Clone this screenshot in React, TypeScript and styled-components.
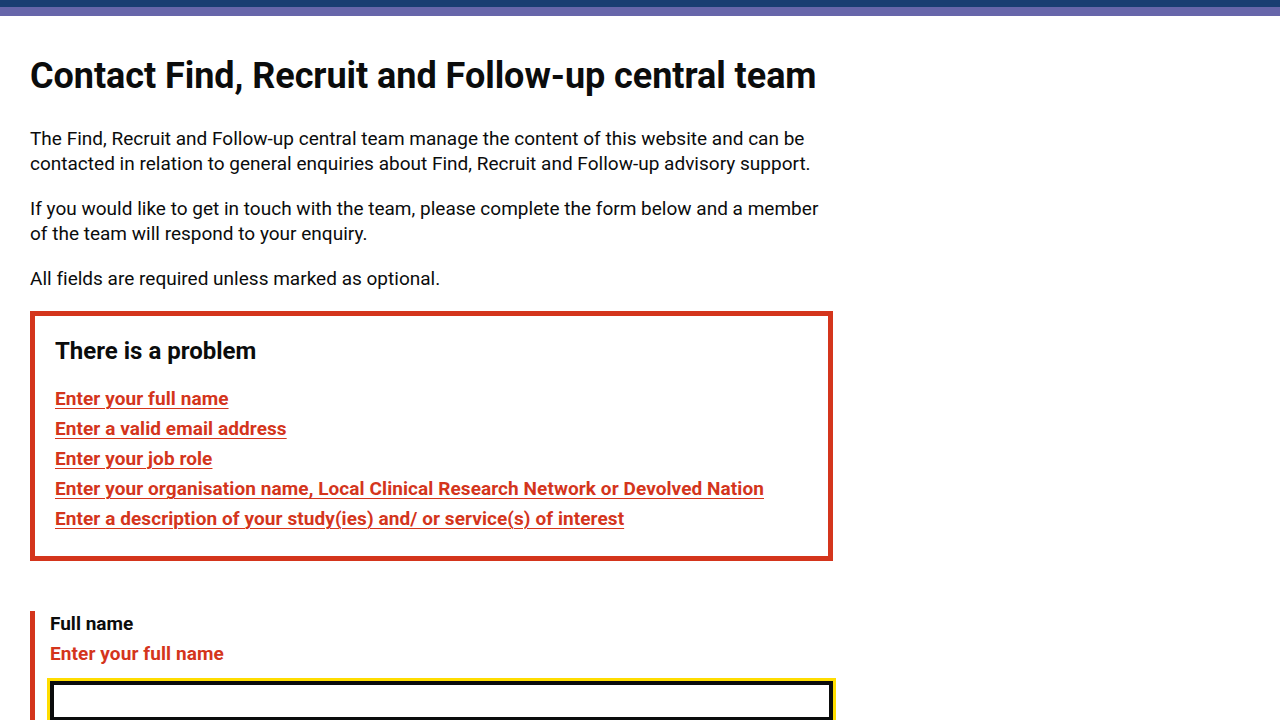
import React from "react";
import styled, { createGlobalStyle } from "styled-components";

const Global = createGlobalStyle`
  html, body { margin: 0; padding: 0; background: #ffffff; }
  body { font-family: Roboto, "Liberation Sans", Arial, sans-serif; color: #0b0c0c; }
  * { box-sizing: border-box; }
`;

const TopBar = styled.div`
  height: 7px;
  background: #1a3e72;
`;

const Stripe = styled.div`
  height: 9px;
  background: #6766aa;
`;

const Main = styled.main`
  padding: 40px 30px 0 30px;
`;

const Column = styled.div`
  width: 803px;
`;

const Title = styled.h1`
  margin: 0 0 30px 0;
  font-size: 36px;
  line-height: 40px;
  font-weight: 700;
  letter-spacing: -0.05px;
  white-space: nowrap;
`;

const Body = styled.p`
  margin: 0 0 20px 0;
  font-size: 19px;
  line-height: 25px;
  font-weight: 400;
  letter-spacing: 0.01px;
`;

const Summary = styled.div`
  border: 5px solid #d4351c;
  padding: 20px;
  margin-bottom: 50px;
`;

const SummaryTitle = styled.h2`
  margin: 0 0 20px 0;
  font-size: 24px;
  line-height: 30px;
  font-weight: 700;
`;

const ErrorList = styled.ul`
  list-style: none;
  margin: 0;
  padding: 0;
`;

const ErrorItem = styled.li`
  margin-bottom: 5px;
  font-size: 19px;
  line-height: 25px;
`;

const ErrorLink = styled.a`
  color: #d4351c;
  font-weight: 700;
  letter-spacing: 0.08px;
  text-decoration: underline;
  text-decoration-thickness: 1px;
  text-underline-offset: 3px;
`;

const FormGroup = styled.div<{ $error?: boolean }>`
  border-left: ${(p) => (p.$error ? "5px solid #d4351c" : "none")};
  padding-left: ${(p) => (p.$error ? "15px" : "0")};
  margin-bottom: 30px;
`;

const Label = styled.label`
  display: block;
  margin-bottom: 5px;
  font-size: 19px;
  line-height: 25px;
  font-weight: 700;
`;

const ErrorMessage = styled.p`
  margin: 0 0 15px 0;
  color: #d4351c;
  font-size: 19px;
  line-height: 25px;
  font-weight: 700;
  letter-spacing: 0.1px;
`;

const Input = styled.input`
  display: block;
  width: 100%;
  height: 40px;
  margin: 0;
  padding: 5px;
  border: 4px solid #0b0c0c;
  outline: 3px solid #ffdd00;
  outline-offset: 0;
  font-family: inherit;
  font-size: 19px;
  border-radius: 0;
`;

const errors = [
  "Enter your full name",
  "Enter a valid email address",
  "Enter your job role",
  "Enter your organisation name, Local Clinical Research Network or Devolved Nation",
  "Enter a description of your study(ies) and/ or service(s) of interest",
];

export default function App() {
  return (
    <>
      <Global />
      <TopBar />
      <Stripe />
      <Main>
        <Column>
          <Title>Contact Find, Recruit and Follow-up central team</Title>
          <Body>
            The Find, Recruit and Follow-up central team manage the content of this website and can be
            contacted in relation to general enquiries about Find, Recruit and Follow-up advisory support.
          </Body>
          <Body>
            If you would like to get in touch with the team, please complete the form below and a member
            of the team will respond to your enquiry.
          </Body>
          <Body>All fields are required unless marked as optional.</Body>
          <Summary>
            <SummaryTitle>There is a problem</SummaryTitle>
            <ErrorList>
              {errors.map((e) => (
                <ErrorItem key={e}>
                  <ErrorLink href="#">{e}</ErrorLink>
                </ErrorItem>
              ))}
            </ErrorList>
          </Summary>
          <FormGroup $error>
            <Label htmlFor="full-name">Full name</Label>
            <ErrorMessage>Enter your full name</ErrorMessage>
            <Input id="full-name" type="text" />
          </FormGroup>
        </Column>
      </Main>
    </>
  );
}
